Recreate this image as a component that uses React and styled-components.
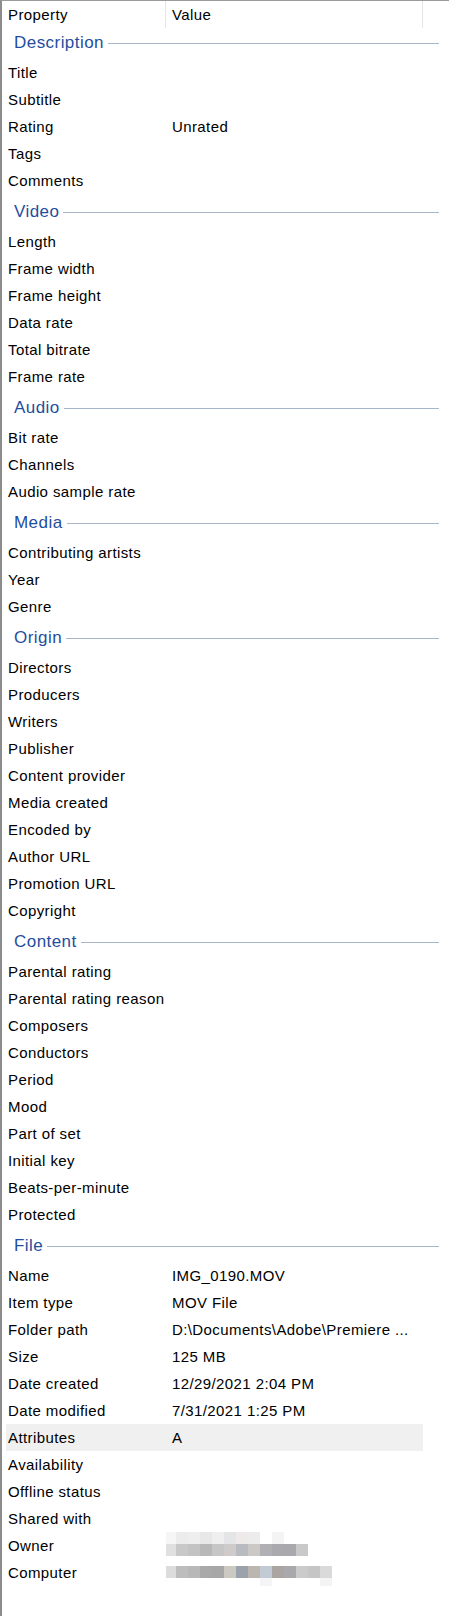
import React from 'react'
import styled, { createGlobalStyle } from 'styled-components'

const GlobalStyle = createGlobalStyle`
  html, body {
    margin: 0;
    padding: 0;
    background: #ffffff;
  }
  body {
    font-family: "Liberation Sans", Arial, sans-serif;
    color: #000000;
  }
`

//================ data =====================================
const sections = [
  {
    title: 'Description',
    rows: [['Title'], ['Subtitle'], ['Rating', 'Unrated'], ['Tags'], ['Comments']],
  },
  {
    title: 'Video',
    rows: [['Length'], ['Frame width'], ['Frame height'], ['Data rate'], ['Total bitrate'], ['Frame rate']],
  },
  {
    title: 'Audio',
    rows: [['Bit rate'], ['Channels'], ['Audio sample rate']],
  },
  {
    title: 'Media',
    rows: [['Contributing artists'], ['Year'], ['Genre']],
  },
  {
    title: 'Origin',
    rows: [
      ['Directors'], ['Producers'], ['Writers'], ['Publisher'], ['Content provider'],
      ['Media created'], ['Encoded by'], ['Author URL'], ['Promotion URL'], ['Copyright'],
    ],
  },
  {
    title: 'Content',
    rows: [
      ['Parental rating'], ['Parental rating reason'], ['Composers'], ['Conductors'], ['Period'],
      ['Mood'], ['Part of set'], ['Initial key'], ['Beats-per-minute'], ['Protected'],
    ],
  },
  {
    title: 'File',
    rows: [
      ['Name', 'IMG_0190.MOV'],
      ['Item type', 'MOV File'],
      ['Folder path', 'D:\\Documents\\Adobe\\Premiere ...'],
      ['Size', '125 MB'],
      ['Date created', '12/29/2021 2:04 PM'],
      ['Date modified', '7/31/2021 1:25 PM'],
      ['Attributes', 'A', true],
      ['Availability'],
      ['Offline status'],
      ['Shared with'],
      ['Owner', 'owner'],
      ['Computer', 'computer'],
    ],
  },
]

// blurred (pixelated) values
const blurOwner = [
  ['#f6f6f6', '#ececec', '#eeeeee', '#e8e8e8', '#f0efef', '#e3e5e7', '#eeeaea', '#ececec', '#ffffff', '#f4f4f4', '#ffffff', '#ffffff'],
  ['#e0e0e0', '#c8c8c8', '#c3c3c3', '#b8b8b8', '#c6c6c6', '#cfcbca', '#b8bcc0', '#ccc8c6', '#b0b0b4', '#aaa9ad', '#a9a8ac', '#c9c9c9'],
]
const blurComputer = [
  ['#dcdcdc', '#bdbdbd', '#b8b8b8', '#a9a9a9', '#a7a7a7', '#ccc8c2', '#9aa3ab', '#bcb6b0', '#c2cad3', '#aaa5a0', '#a9a9ad', '#cbcbcb', '#c5c5c5', '#dadada'],
  ['#ffffff', '#ffffff', '#ffffff', '#ffffff', '#ffffff', '#ffffff', '#ffffff', '#ffffff', '#f5f5f7', '#ffffff', '#ffffff', '#ffffff', '#ffffff', '#f4f4f4'],
]

const Pixelated = ({ grid }) => (
  <svg width={grid[0].length * 12} height={24} style={{ display: 'block' }}>
    {grid.map((line, r) =>
      line.map((c, i) => <rect key={r + '-' + i} x={i * 12} y={r * 12} width={12} height={12} fill={c} />)
    )}
  </svg>
)

//======================= component ========================================
const App = () => {
  return (
    <>
      <GlobalStyle />
      <Window>
        <Header>
          <HeadCell>Property</HeadCell>
          <HeadCell>Value</HeadCell>
        </Header>

        {sections.map((s, si) => (
          <Section key={s.title}>
            <GroupHead first={si === 0}>
              <GroupTitle>{s.title}</GroupTitle>
              <GroupLine />
            </GroupHead>
            {s.rows.map(([label, value, selected]) => (
              <Row key={label} selected={selected}>
                <Label>{label}</Label>
                <Value>
                  {value === 'owner' ? (
                    <Blur top={-1}><Pixelated grid={blurOwner} /></Blur>
                  ) : value === 'computer' ? (
                    <Blur top={6}><Pixelated grid={blurComputer} /></Blur>
                  ) : (
                    value
                  )}
                </Value>
              </Row>
            ))}
          </Section>
        ))}
      </Window>
    </>
  )
}

const Window = styled.div`
  width: 449px;
  min-height: 100vh;
  box-sizing: border-box;
  border-left: 2px solid #8c8c8c;
  border-top: 1px solid #9a9a9a;
  background: #ffffff;
  font-size: 15px;
  letter-spacing: 0.4px;
`

const Header = styled.div`
  display: grid;
  grid-template-columns: 164px 257px 1fr;
  height: 27px;
`

const HeadCell = styled.div`
  display: flex;
  align-items: center;
  padding-left: 6px;
  padding-top: 1px;
  border-right: 1px solid #e5e5e5;
  line-height: 26px;
`

const Section = styled.div`
  display: flex;
  flex-direction: column;
`

const GroupHead = styled.div`
  display: flex;
  align-items: center;
  box-sizing: border-box;
  height: ${(props) => (props.first ? '30.5px' : '34px')};
  padding-top: ${(props) => (props.first ? '0px' : '3px')};
  padding-left: 12px;
  margin-right: 10px;
`

const GroupTitle = styled.span`
  font-size: 17px;
  letter-spacing: 0.45px;
  color: #1f4e9e;
  line-height: 30px;
  margin-right: 4px;
`

const GroupLine = styled.div`
  flex: 1;
  height: 1px;
  background: #a8b6cb;
`

const Row = styled.div`
  display: grid;
  grid-template-columns: 160px 1fr;
  margin-left: 4px;
  width: 417px;
  height: 27px;
  line-height: 27px;
  background: ${(props) => (props.selected ? '#f0f0f0' : 'transparent')};
`

const Label = styled.div`
  padding-left: 2px;
  white-space: nowrap;
`

const Value = styled.div`
  padding-left: 6px;
  white-space: nowrap;
  overflow: hidden;
  display: flex;
  align-items: center;
`

const Blur = styled.div`
  position: relative;
  top: ${(props) => props.top}px;
  margin-left: -8px;
`

export default App
